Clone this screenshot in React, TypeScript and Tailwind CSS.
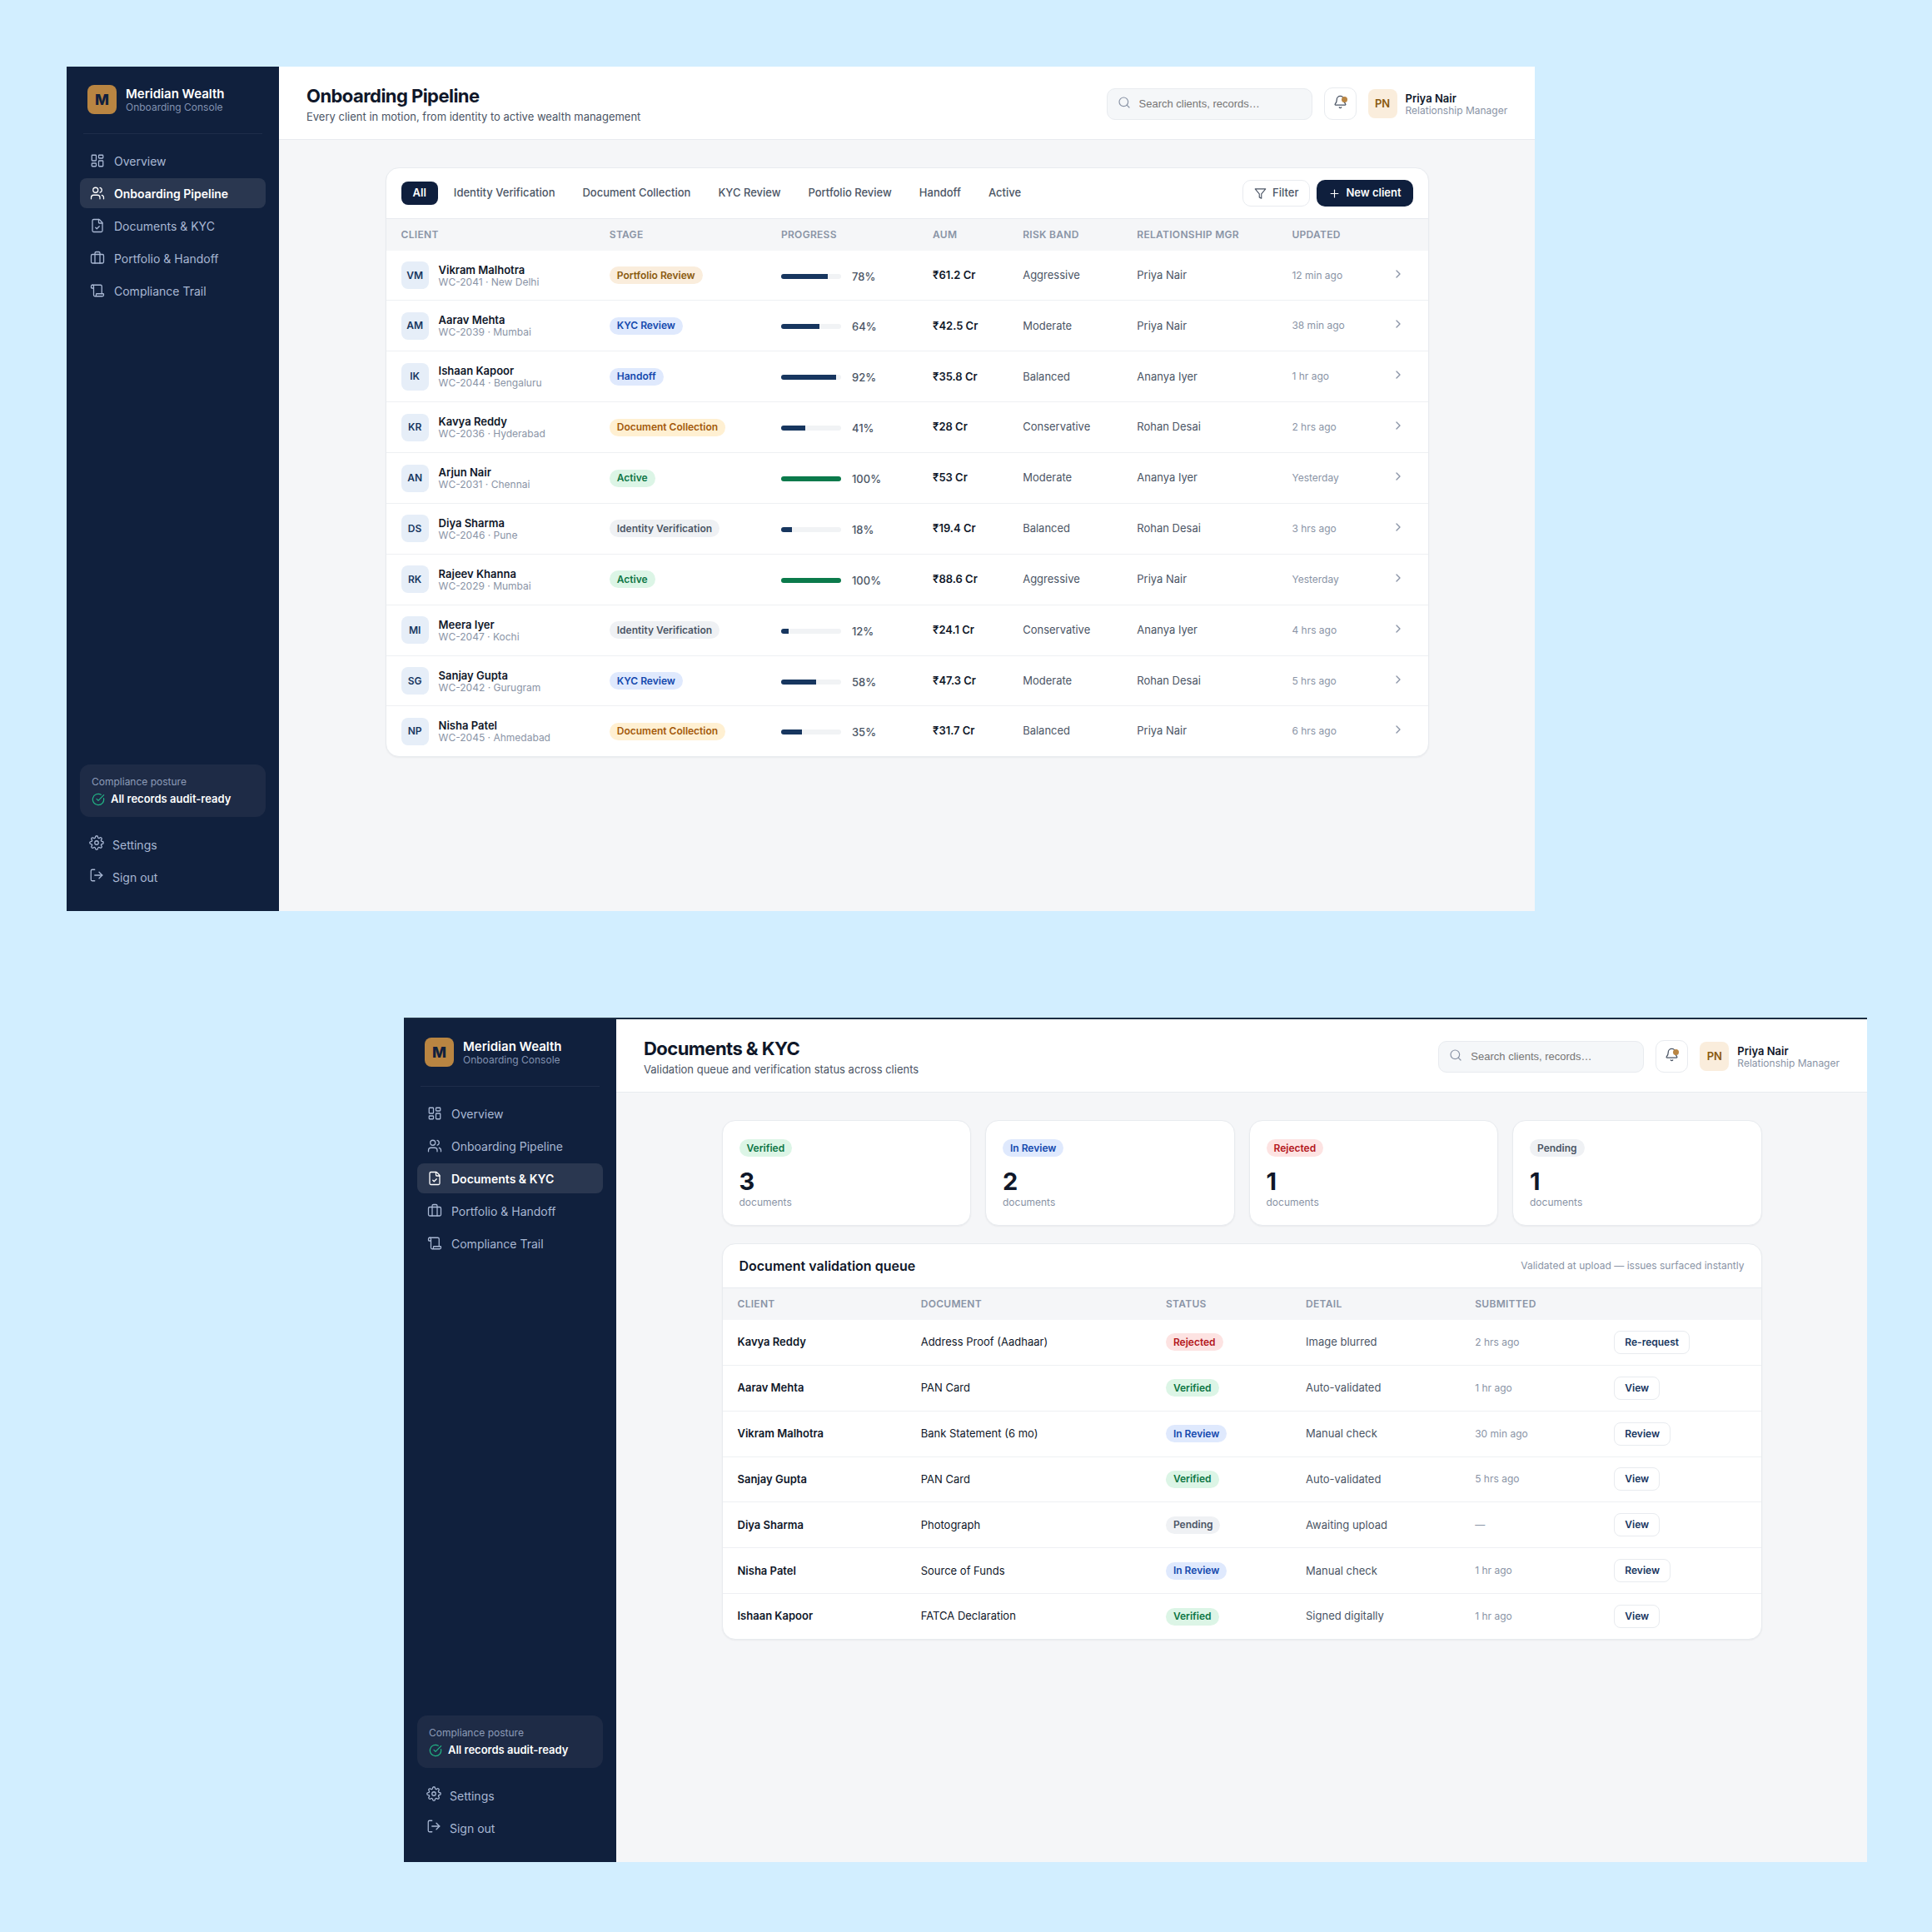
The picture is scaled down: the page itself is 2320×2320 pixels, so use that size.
import React from 'react'
import {
  Bell,
  Briefcase,
  ChevronRight,
  CircleCheckBig,
  FileCheck,
  LayoutDashboard,
  LogOut,
  Plus,
  Scroll,
  Search,
  Users,
} from 'lucide-react'
import type { LucideIcon } from 'lucide-react'
import { FiFilter, FiSettings } from 'react-icons/fi'

const NAV_ITEMS: { label: string; icon: LucideIcon }[] = [
  { label: 'Overview', icon: LayoutDashboard },
  { label: 'Onboarding Pipeline', icon: Users },
  { label: 'Documents & KYC', icon: FileCheck },
  { label: 'Portfolio & Handoff', icon: Briefcase },
  { label: 'Compliance Trail', icon: Scroll },
]

const STAGES = [
  'All',
  'Identity Verification',
  'Document Collection',
  'KYC Review',
  'Portfolio Review',
  'Handoff',
  'Active',
]

const CLIENTS = [
  { initials: 'VM', name: 'Vikram Malhotra', ref: 'WC-2041 · New Delhi', stage: 'Portfolio Review', progress: 78, aum: '₹61.2 Cr', risk: 'Aggressive', manager: 'Priya Nair', updated: '12 min ago' },
  { initials: 'AM', name: 'Aarav Mehta', ref: 'WC-2039 · Mumbai', stage: 'KYC Review', progress: 64, aum: '₹42.5 Cr', risk: 'Moderate', manager: 'Priya Nair', updated: '38 min ago' },
  { initials: 'IK', name: 'Ishaan Kapoor', ref: 'WC-2044 · Bengaluru', stage: 'Handoff', progress: 92, aum: '₹35.8 Cr', risk: 'Balanced', manager: 'Ananya Iyer', updated: '1 hr ago' },
  { initials: 'KR', name: 'Kavya Reddy', ref: 'WC-2036 · Hyderabad', stage: 'Document Collection', progress: 41, aum: '₹28 Cr', risk: 'Conservative', manager: 'Rohan Desai', updated: '2 hrs ago' },
  { initials: 'AN', name: 'Arjun Nair', ref: 'WC-2031 · Chennai', stage: 'Active', progress: 100, aum: '₹53 Cr', risk: 'Moderate', manager: 'Ananya Iyer', updated: 'Yesterday' },
  { initials: 'DS', name: 'Diya Sharma', ref: 'WC-2046 · Pune', stage: 'Identity Verification', progress: 18, aum: '₹19.4 Cr', risk: 'Balanced', manager: 'Rohan Desai', updated: '3 hrs ago' },
  { initials: 'RK', name: 'Rajeev Khanna', ref: 'WC-2029 · Mumbai', stage: 'Active', progress: 100, aum: '₹88.6 Cr', risk: 'Aggressive', manager: 'Priya Nair', updated: 'Yesterday' },
  { initials: 'MI', name: 'Meera Iyer', ref: 'WC-2047 · Kochi', stage: 'Identity Verification', progress: 12, aum: '₹24.1 Cr', risk: 'Conservative', manager: 'Ananya Iyer', updated: '4 hrs ago' },
  { initials: 'SG', name: 'Sanjay Gupta', ref: 'WC-2042 · Gurugram', stage: 'KYC Review', progress: 58, aum: '₹47.3 Cr', risk: 'Moderate', manager: 'Rohan Desai', updated: '5 hrs ago' },
  { initials: 'NP', name: 'Nisha Patel', ref: 'WC-2045 · Ahmedabad', stage: 'Document Collection', progress: 35, aum: '₹31.7 Cr', risk: 'Balanced', manager: 'Priya Nair', updated: '6 hrs ago' },
]

const SUMMARY = [
  { status: 'Verified', count: 3 },
  { status: 'In Review', count: 2 },
  { status: 'Rejected', count: 1 },
  { status: 'Pending', count: 1 },
]

const DOCUMENTS = [
  { client: 'Kavya Reddy', document: 'Address Proof (Aadhaar)', status: 'Rejected', detail: 'Image blurred', submitted: '2 hrs ago', action: 'Re-request' },
  { client: 'Aarav Mehta', document: 'PAN Card', status: 'Verified', detail: 'Auto-validated', submitted: '1 hr ago', action: 'View' },
  { client: 'Vikram Malhotra', document: 'Bank Statement (6 mo)', status: 'In Review', detail: 'Manual check', submitted: '30 min ago', action: 'Review' },
  { client: 'Sanjay Gupta', document: 'PAN Card', status: 'Verified', detail: 'Auto-validated', submitted: '5 hrs ago', action: 'View' },
  { client: 'Diya Sharma', document: 'Photograph', status: 'Pending', detail: 'Awaiting upload', submitted: '—', action: 'View' },
  { client: 'Nisha Patel', document: 'Source of Funds', status: 'In Review', detail: 'Manual check', submitted: '1 hr ago', action: 'Review' },
  { client: 'Ishaan Kapoor', document: 'FATCA Declaration', status: 'Verified', detail: 'Signed digitally', submitted: '1 hr ago', action: 'View' },
]

const BADGE_STYLES: Record<string, string> = {
  'Portfolio Review': 'bg-[#faeddc] text-[#8a5a0f]',
  'KYC Review': 'bg-[#dfe9fd] text-[#1348ad]',
  Handoff: 'bg-[#dfe9fd] text-[#1348ad]',
  'Document Collection': 'bg-[#fff0d2] text-[#a3590b]',
  Active: 'bg-[#dcf5e6] text-[#0c7544]',
  'Identity Verification': 'bg-[#eff1f4] text-[#4b5565]',
  Verified: 'bg-[#dcf5e6] text-[#0c7544]',
  'In Review': 'bg-[#dfe9fd] text-[#1348ad]',
  Rejected: 'bg-[#fde3e2] text-[#b3161b]',
  Pending: 'bg-[#eff1f4] text-[#4b5565]',
}

const Badge: React.FC<{ label: string }> = ({ label }) => (
  <span className={`inline-flex h-[21px] items-center rounded-full px-[9px] text-[12px] font-semibold ${BADGE_STYLES[label]}`}>
    {label}
  </span>
)

const Sidebar: React.FC<{ active: string }> = ({ active }) => (
  <aside className="flex w-[255px] shrink-0 flex-col bg-[#10203d] px-4 pt-[22px] pb-[23px]">
    {/* Brand */}
    <div className="mx-1 flex h-[59px] items-start gap-[11px] border-b border-[#1e2d4a] pl-[5px]">
      <div className="flex h-[35px] w-[35px] items-center justify-center rounded-lg bg-[#b98542] text-[18px] font-extrabold text-[#10203d]">M</div>
      <div className="pt-[2px]">
        <p className="text-[15px] leading-[18px] font-semibold text-white">Meridian Wealth</p>
        <p className="text-[12px] leading-[14px] text-[#8292b0]">Onboarding Console</p>
      </div>
    </div>

    {/* Main navigation */}
    <nav className="mt-[14px] flex flex-col gap-[3px]">
      {NAV_ITEMS.map(({ label, icon: Icon }) => (
        <a
          key={label}
          href="#"
          className={`flex h-9 items-center gap-[11px] rounded-lg px-3 text-[14px] ${
            label === active ? 'bg-[#2a3750] font-semibold text-white' : 'text-[#a9b8d4]'
          }`}
        >
          <Icon size={18} strokeWidth={1.7} />
          {label}
        </a>
      ))}
    </nav>

    {/* Compliance summary and account links */}
    <div className="mt-auto">
      <div className="rounded-xl bg-[#1e2b46] px-[14px] py-3">
        <p className="text-[12px] leading-[18px] text-[#8d9cb8]">Compliance posture</p>
        <p className="mt-[2px] flex items-center gap-[7px] text-[13px] leading-[19px] font-semibold text-white">
          <CircleCheckBig size={16} strokeWidth={1.8} className="text-[#22b585]" />
          All records audit-ready
        </p>
      </div>
      <div className="mt-[15px] flex flex-col gap-[3px]">
        <button type="button" className="flex h-9 items-center gap-[10px] rounded-lg px-[11px] text-[14px] text-[#a9b8d4]">
          <FiSettings size={18} strokeWidth={1.7} className="mb-1" />
          Settings
        </button>
        <button type="button" className="flex h-9 items-center gap-[10px] rounded-lg px-[11px] text-[14px] text-[#a9b8d4]">
          <LogOut size={18} strokeWidth={1.7} className="mb-1" />
          Sign out
        </button>
      </div>
    </div>
  </aside>
)

const Header: React.FC<{ title: string; subtitle: string }> = ({ title, subtitle }) => (
  <header className="flex h-[88px] items-center justify-between border-b border-[#e8ebef] bg-white px-[33px]">
    <div className="pt-[5px]">
      <h1 className="text-[22px] leading-7 font-bold tracking-tight text-[#0f1729]">{title}</h1>
      <p className="text-[13px] leading-[22px] text-[#4b5565]">{subtitle}</p>
    </div>
    <div className="flex items-center gap-[14px] pt-[2px]">
      <label className="flex h-[38px] w-[247px] items-center gap-[10px] rounded-[10px] border border-[#e8ebef] bg-[#f5f7f9] px-3 text-[#8a94a6]">
        <Search size={16} strokeWidth={1.8} className="mb-1" />
        <input
          type="text"
          aria-label="Search clients, records"
          placeholder="Search clients, records…"
          className="min-w-0 flex-1 bg-transparent font-['Liberation_Sans',sans-serif] text-[13px] text-[#0f1729] outline-none placeholder:text-[#757575]"
        />
      </label>
      <button
        type="button"
        aria-label="Notifications"
        className="relative flex h-[39px] w-[39px] items-center justify-center rounded-[10px] border border-[#e8ebef] bg-white text-[#4b5565]"
      >
        <Bell size={17} strokeWidth={1.8} className="mb-1" />
        <span className="absolute top-[10px] right-[10px] h-[7px] w-[7px] rounded-full bg-[#b98542]" />
      </button>
      <div className="flex items-center gap-[10px]">
        <div className="flex h-[35px] w-[35px] items-center justify-center rounded-lg bg-[#faeddc] text-[13px] font-semibold text-[#8a5a0f]">PN</div>
        <div>
          <p className="text-[13px] leading-4 font-semibold text-[#0f1729]">Priya Nair</p>
          <p className="text-[12px] leading-[14px] text-[#8a94a6]">Relationship Manager</p>
        </div>
      </div>
    </div>
  </header>
)

const TableHead: React.FC<{ columns: string[] }> = ({ columns }) => (
  <thead>
    <tr className="h-[38px] bg-[#f5f6f8]">
      {columns.map((column) => (
        <th key={column} scope="col" className="pl-[18px] text-left text-[12px] font-semibold tracking-wide text-[#8a94a6] uppercase">
          {column}
        </th>
      ))}
      <th scope="col" aria-label="Actions" />
    </tr>
  </thead>
)

const PipelineTable: React.FC = () => (
  <section className="mx-auto max-w-[1253px] overflow-hidden rounded-2xl border border-[#e8ebef] bg-white shadow-xs">
    <div className="flex h-[61px] items-center justify-between border-b border-[#e8ebef] px-[18px]">
      <div className="flex gap-[5px]">
        {STAGES.map((stage) => (
          <button
            key={stage}
            type="button"
            className={`h-7 rounded-lg px-[14px] text-[13px] ${
              stage === 'All' ? 'bg-[#0f1f3d] font-semibold text-white' : 'font-medium text-[#4b5565]'
            }`}
          >
            {stage}
          </button>
        ))}
      </div>
      <div className="flex gap-2">
        <button type="button" className="flex h-8 items-center gap-[7px] rounded-[10px] border border-[#e8ebef] px-[13px] text-[13px] font-medium text-[#4b5565]">
          <FiFilter size={15} strokeWidth={1.8} />
          Filter
        </button>
        <button type="button" className="flex h-8 items-center gap-[6px] rounded-[10px] bg-[#0f1f3d] px-[14px] text-[13px] font-semibold text-white">
          <Plus size={15} strokeWidth={1.8} />
          New client
        </button>
      </div>
    </div>

    <table className="h-[645px] w-full table-fixed">
      <colgroup>
        <col className="w-[250px]" />
        <col className="w-[206px]" />
        <col className="w-[182px]" />
        <col className="w-[108px]" />
        <col className="w-[137px]" />
        <col className="w-[186px]" />
        <col className="w-[120px]" />
        <col className="w-[61px]" />
      </colgroup>
      <TableHead columns={['Client', 'Stage', 'Progress', 'AUM', 'Risk Band', 'Relationship Mgr', 'Updated']} />
      <tbody className="divide-y divide-[#eef0f3]">
        {CLIENTS.map((client) => (
          <tr key={client.initials} className="text-[13px] text-[#4b5565]">
            <td className="pl-[18px]">
              <div className="flex items-center gap-3">
                <span className="flex h-[33px] w-[33px] items-center justify-center rounded-lg bg-[#e6eef8] text-[12px] font-semibold text-[#17365f]">
                  {client.initials}
                </span>
                <div>
                  <p className="leading-4 font-semibold text-[#0f1729]">{client.name}</p>
                  <p className="text-[12px] leading-[14px] text-[#8a94a6]">{client.ref}</p>
                </div>
              </div>
            </td>
            <td className="pl-[18px]">
              <Badge label={client.stage} />
            </td>
            <td className="pl-[18px]">
              <div className="flex items-center gap-[13px] pt-[2px]">
                <div className="h-[6px] w-[72px] overflow-hidden rounded-full bg-[#f1f3f5]">
                  <div
                    className={`h-full ${client.progress === 100 ? 'bg-[#0b7a4b]' : 'bg-[#17365f]'}`}
                    style={{ width: `${client.progress}%` }}
                  />
                </div>
                <span className="text-[13px] leading-4 font-medium">{client.progress}%</span>
              </div>
            </td>
            <td className="pl-[18px] font-semibold text-[#0f1729]">{client.aum}</td>
            <td className="pl-[18px]">{client.risk}</td>
            <td className="pl-[18px]">{client.manager}</td>
            <td className="pl-[18px] text-[12px] text-[#8a94a6]">{client.updated}</td>
            <td className="pl-[17px]">
              <button type="button" aria-label={`Open ${client.name}`} className="flex pb-1 text-[#8a94a6]">
                <ChevronRight size={16} strokeWidth={2} />
              </button>
            </td>
          </tr>
        ))}
      </tbody>
    </table>
  </section>
)

const DocumentQueue: React.FC = () => (
  <div className="mx-auto max-w-[1249px]">
    <div className="grid grid-cols-4 gap-[17px]">
      {SUMMARY.map(({ status, count }) => (
        <div key={status} className="h-[127px] rounded-2xl border border-[#e8ebef] bg-white px-5 pt-[22px] shadow-xs">
          <div className="flex">
            <Badge label={status} />
          </div>
          <p className="mt-3 text-[29px] leading-9 font-bold text-[#0f1729]">{count}</p>
          <p className="text-[12px] leading-[14px] text-[#8a94a6]">documents</p>
        </div>
      ))}
    </div>

    <section className="mt-[21px] overflow-hidden rounded-2xl border border-[#e8ebef] bg-white shadow-xs">
      <div className="flex h-[53px] items-center justify-between border-b border-[#e8ebef] px-5">
        <h2 className="text-[16px] font-semibold text-[#0f1729]">Document validation queue</h2>
        <p className="text-[12px] text-[#8a94a6]">Validated at upload — issues surfaced instantly</p>
      </div>
      <table className="h-[421px] w-full table-fixed">
        <colgroup>
          <col className="w-[220px]" />
          <col className="w-[294px]" />
          <col className="w-[168px]" />
          <col className="w-[203px]" />
          <col className="w-[167px]" />
          <col className="w-[194px]" />
        </colgroup>
        <TableHead columns={['Client', 'Document', 'Status', 'Detail', 'Submitted']} />
        <tbody className="divide-y divide-[#eef0f3]">
          {DOCUMENTS.map((row) => (
            <tr key={row.client} className="text-[13px] text-[#4b5565]">
              <td className="pl-[18px] font-semibold text-[#0f1729]">{row.client}</td>
              <td className="pl-[18px] text-[#0f1729]">{row.document}</td>
              <td className="pl-[18px]">
                <Badge label={row.status} />
              </td>
              <td className="pl-[18px]">{row.detail}</td>
              <td className="pl-[18px] text-[12px] text-[#8a94a6]">{row.submitted}</td>
              <td className="pl-[18px]">
                <button type="button" className="h-7 rounded-lg border border-[#e8ebef] px-3 text-[12px] font-semibold text-[#17365f]">
                  {row.action}
                </button>
              </td>
            </tr>
          ))}
        </tbody>
      </table>
    </section>
  </div>
)

const App: React.FC = () => (
  <div className="min-h-screen bg-[#d2eeff] pt-20 pb-[84px] font-['Inter',sans-serif]">
    <div className="ml-20 flex min-h-[1014px] w-[76%] bg-[#f5f6f8]">
      <Sidebar active="Onboarding Pipeline" />
      <div className="flex-1">
        <Header title="Onboarding Pipeline" subtitle="Every client in motion, from identity to active wealth management" />
        <main className="px-8 py-[33px]">
          <PipelineTable />
        </main>
      </div>
    </div>

    <div className="mt-32 mr-[78px] ml-[485px] flex min-h-[1014px] border-t-2 border-[#1b2d42] bg-[#f5f6f8]">
      <Sidebar active="Documents & KYC" />
      <div className="flex-1">
        <Header title="Documents & KYC" subtitle="Validation queue and verification status across clients" />
        <main className="px-8 py-[33px]">
          <DocumentQueue />
        </main>
      </div>
    </div>
  </div>
)

export default App
